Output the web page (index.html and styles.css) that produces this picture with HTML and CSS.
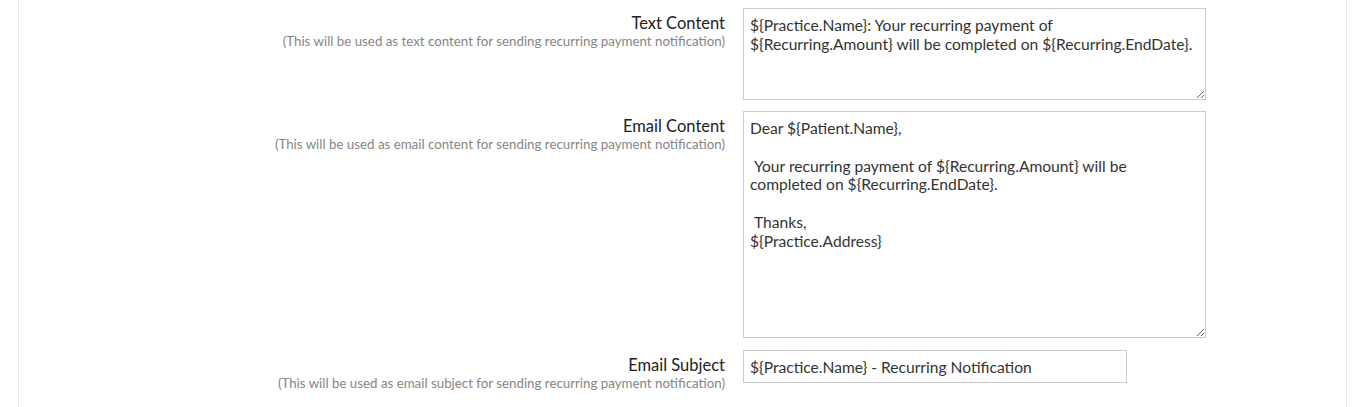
FILE: index.html
```html
<!DOCTYPE html>
<html>
<head>
    <meta charset="UTF-8">
    <title>Recurring Payment Notification</title>
    <link rel="stylesheet" href="styles.css">
</head>
<body>
    <div class="panel">
        <div class="form-row">
            <div class="label-col">
                <label for="textContent">Text Content</label>
                <span class="hint">(This will be used as text content for sending recurring payment notification)</span>
            </div>
            <div class="control-col">
                <textarea id="textContent" class="text-box">${Practice.Name}: Your recurring payment of ${Recurring.Amount} will be completed on ${Recurring.EndDate}.</textarea>
            </div>
        </div>
        <div class="form-row">
            <div class="label-col">
                <label for="emailContent">Email Content</label>
                <span class="hint">(This will be used as email content for sending recurring payment notification)</span>
            </div>
            <div class="control-col">
                <textarea id="emailContent" class="email-box">Dear ${Patient.Name},

 Your recurring payment of ${Recurring.Amount} will be completed on ${Recurring.EndDate}.

 Thanks,
${Practice.Address}</textarea>
            </div>
        </div>
        <div class="form-row">
            <div class="label-col">
                <label for="emailSubject">Email Subject</label>
                <span class="hint">(This will be used as email subject for sending recurring payment notification)</span>
            </div>
            <div class="control-col">
                <input type="text" id="emailSubject" value="${Practice.Name} - Recurring Notification">
            </div>
        </div>
    </div>
</body>
</html>
```

FILE: styles.css
```css
body {
    font-family: Lato, "Open Sans", sans-serif;
    margin: 0;
    background-color: #fff;
    overflow: hidden;
}

.panel {
    margin: 0 9px 0 18px;
    padding: 8px 0 22px;
    border: 1px solid #e3e3e3;
    border-top: none; /* 顶部在上方已滚出视图 */
}

.form-row {
    display: flex;
    margin-bottom: 11px;
}

.form-row:nth-child(2) {
    margin-bottom: 12px;
}

.form-row:last-child {
    margin-bottom: 0;
}

.label-col {
    width: 706px;
    display: flex;
    flex-direction: column;
    align-items: flex-end;
    padding-top: 5px;
}

.label-col label {
    font-size: 16.5px;
    color: #222;
    line-height: 20px;
}

.hint {
    font-size: 13.3px;
    color: #858585;
    line-height: 16px;
}

.control-col {
    padding-left: 18px;
}

textarea, input {
    display: block;
    font-family: Lato, "Open Sans", sans-serif;
    font-size: 15.6px;
    color: #333;
    border: 1px solid #ccc;
    box-sizing: border-box;
    padding: 7px 6px 6px;
    margin: 0;
    outline: none;
}

textarea {
    width: 463px;
    line-height: 18.8px;
    resize: vertical;
}

.text-box {
    height: 92px;
}

.email-box {
    height: 227px;
}

input {
    width: 384px;
    height: 33px;
    padding: 0 6px;
}
```
